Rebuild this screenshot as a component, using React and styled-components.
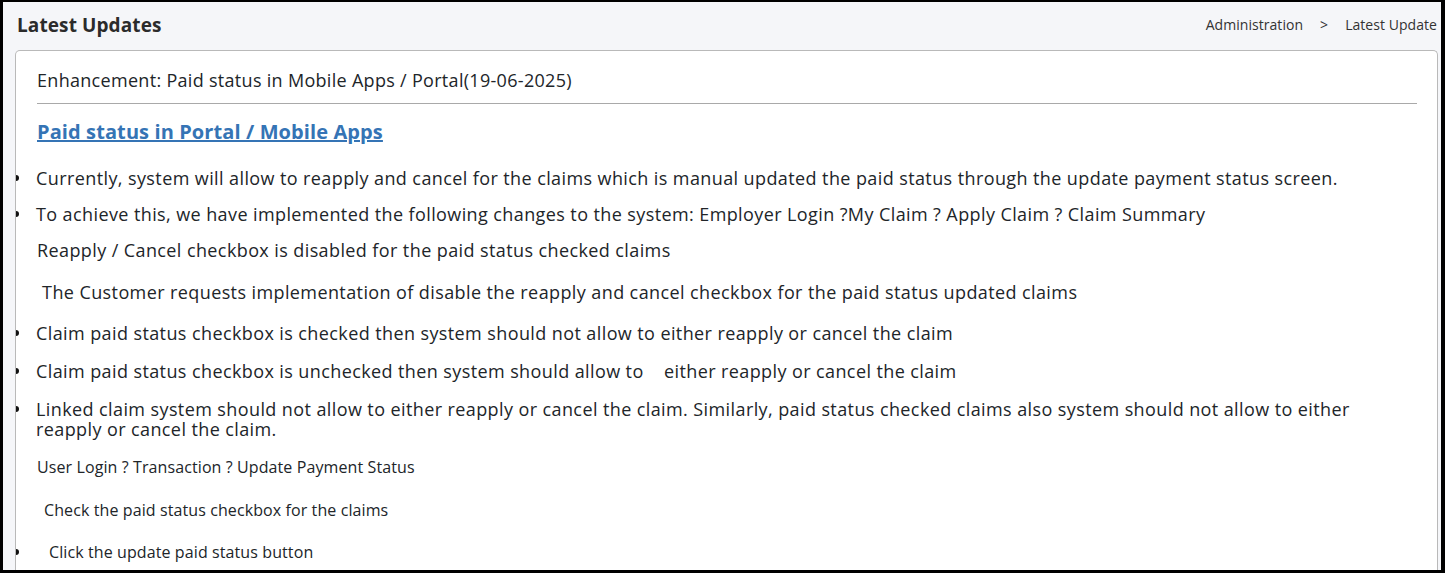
import React from 'react';
import styled, { createGlobalStyle } from 'styled-components';

const GlobalStyle = createGlobalStyle`
  html, body {
    margin: 0;
    padding: 0;
    background: #000;
  }
  body {
    font-family: "Open Sans", Lato, sans-serif;
    color: #212529;
  }
`;

const Frame = styled.div`
  height: 573px;
  box-sizing: border-box;
  border-style: solid;
  border-color: #000;
  border-width: 2px 4px 3px 3px;
  background-color: #f5f6f9;
  overflow: hidden;
  display: flex;
  flex-direction: column;
`;

const HeaderRow = styled.div`
  display: flex;
  align-items: center;
  justify-content: space-between;
  height: 45px;
  padding: 0 4px 3px 14px;
  flex-shrink: 0;
`;

const Title = styled.h1`
  margin: 0;
  font-size: 19px;
  letter-spacing: 0.1px;
  font-weight: 700;
  color: #2b2b2b;
`;

const Crumbs = styled.div`
  display: flex;
  gap: 17px;
  font-size: 14px;
  letter-spacing: 0.05px;
  color: #333;
`;

const Card = styled.div`
  margin: 0 3px 0 12px;
  flex: 1;
  background: #fff;
  border: 1px solid #b9b9b9;
  border-bottom: none;
  border-radius: 5px 5px 0 0;
  padding: 16px 20px 0 20px;
  overflow: hidden;
`;

const Heading = styled.div`
  margin-left: 1px;
  font-size: 18px;
  letter-spacing: 0.3px;
  line-height: 26px;
  padding-bottom: 10px;
  border-bottom: 1px solid #a9a9a9;
`;

const Link = styled.a`
  display: block;
  margin: 14px 0 22px 1px;
  font-size: 20px;
  letter-spacing: 0.1px;
  font-weight: 700;
  color: #3574b5;
  text-decoration: underline;
  line-height: 28px;
`;

const Item = styled.div`
  position: relative;
  font-size: ${(p) => (p.small ? '16px' : '18px')};
  letter-spacing: ${(p) => (p.small ? '0.1px' : '0.4px')};
  line-height: 20px;
  margin-top: ${(p) => p.gap}px;
  padding-left: ${(p) => p.indent || 0}px;
  padding-right: 30px;
  white-space: pre-wrap;

  &::before {
    content: '';
    display: ${(p) => (p.bullet ? 'block' : 'none')};
    position: absolute;
    left: -23px;
    top: 7px;
    width: 6px;
    height: 6px;
    border-radius: 50%;
    background: #111;
  }
`;

export default function App() {
  return (
    <>
      <GlobalStyle />
      <Frame>
        <HeaderRow>
          <Title>Latest Updates</Title>
          <Crumbs>
            <span>Administration</span>
            <span>&gt;</span>
            <span>Latest Update</span>
          </Crumbs>
        </HeaderRow>
        <Card>
          <Heading>Enhancement: Paid status in Mobile Apps / Portal(19-06-2025)</Heading>
          <Link href="#">Paid status in Portal / Mobile Apps</Link>
          <Item bullet gap={0}>
            Currently, system will allow to reapply and cancel for the claims which is manual updated the paid status through the update payment status screen.
          </Item>
          <Item bullet gap={16}>
            To achieve this, we have implemented the following changes to the system: Employer Login ?My Claim ? Apply Claim ? Claim Summary
          </Item>
          <Item gap={16} indent={1}>Reapply / Cancel checkbox is disabled for the paid status checked claims</Item>
          <Item gap={22} indent={1}> The Customer requests implementation of disable the reapply and cancel checkbox for the paid status updated claims</Item>
          <Item bullet gap={21}>
            Claim paid status checkbox is checked then system should not allow to either reapply or cancel the claim
          </Item>
          <Item bullet gap={18}>
            Claim paid status checkbox is unchecked then system should allow to{'    '}either reapply or cancel the claim
          </Item>
          <Item bullet gap={18}>
            Linked claim system should not allow to either reapply or cancel the claim. Similarly, paid status checked claims also system should not allow to either reapply or cancel the claim.
          </Item>
          <Item small gap={18} indent={1}>User Login ? Transaction ? Update Payment Status</Item>
          <Item small gap={23} indent={8}>Check the paid status checkbox for the claims</Item>
          <Item small bullet gap={22} indent={13}>Click the update paid status button</Item>
        </Card>
      </Frame>
    </>
  );
}
